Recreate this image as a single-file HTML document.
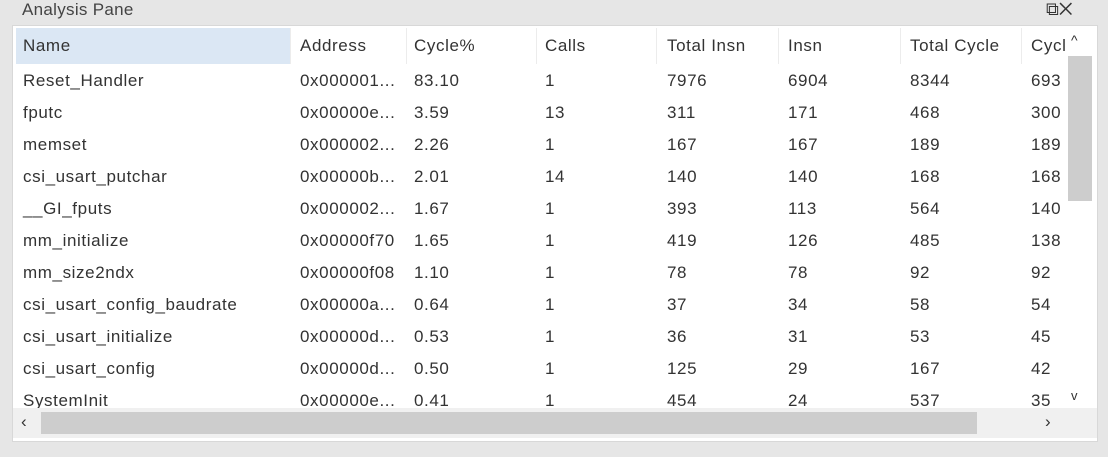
<!DOCTYPE html><html><head><style>
body{margin:0;width:1108px;height:457px;background:#e6e6e6;font-family:"Liberation Sans",sans-serif;overflow:hidden;position:relative;color:#333}
.title{position:absolute;left:22px;top:0;font-size:17px;color:#444;letter-spacing:.3px}
.ctl{position:absolute;left:1046px;top:-1px;font-size:18px;color:#333}
.panel{position:absolute;left:12px;top:25px;width:1084px;height:415px;background:#fff;border:1px solid #d8d8d8}
.c{position:absolute;font-size:17px;white-space:nowrap;letter-spacing:.6px}
.hl{position:absolute;left:3px;top:2px;width:274px;height:36px;background:#dbe7f4}
.sep{position:absolute;top:2px;width:1px;height:36px;background:#ececec}
.vs{position:absolute;left:1055px;top:30px;width:24px;height:145px;background:#cdcdcd}
.hs{position:absolute;left:28px;top:386px;width:936px;height:22px;background:#cdcdcd}
.bar{position:absolute;left:0;top:382px;width:1084px;height:30px;background:#f0f0f0}
</style></head><body>
<div class="title">Analysis Pane</div>
<div class="ctl">⧉✕</div>
<div class="panel">
<div class="hl"></div>
<div class="sep" style="left:277px"></div><div class="sep" style="left:393px"></div><div class="sep" style="left:523px"></div><div class="sep" style="left:643px"></div><div class="sep" style="left:765px"></div><div class="sep" style="left:887px"></div><div class="sep" style="left:1008px"></div>
<div id="t"></div>
<div class="bar"></div>
<div class="vs"></div>
<div class="hs"></div>
<div class="c" style="left:1058px;top:6px;font-size:14px">^</div>
<div class="c" style="left:1058px;top:362px;font-size:13px">v</div>
<div class="c" style="left:8px;top:386px">‹</div>
<div class="c" style="left:1032px;top:386px">›</div>
</div>
<script>
var xs=[10,287,401,532,654,775,897,1018];
var rows=[["Name","Address","Cycle%","Calls","Total Insn","Insn","Total Cycle","Cycl"],
["Reset_Handler","0x000001...","83.10","1","7976","6904","8344","693"],
["fputc","0x00000e...","3.59","13","311","171","468","300"],
["memset","0x000002...","2.26","1","167","167","189","189"],
["csi_usart_putchar","0x00000b...","2.01","14","140","140","168","168"],
["__GI_fputs","0x000002...","1.67","1","393","113","564","140"],
["mm_initialize","0x00000f70","1.65","1","419","126","485","138"],
["mm_size2ndx","0x00000f08","1.10","1","78","78","92","92"],
["csi_usart_config_baudrate","0x00000a...","0.64","1","37","34","58","54"],
["csi_usart_initialize","0x00000d...","0.53","1","36","31","53","45"],
["csi_usart_config","0x00000d...","0.50","1","125","29","167","42"],
["SystemInit","0x00000e...","0.41","1","454","24","537","35"]];
var h="";rows.forEach(function(r,i){var y=i==0?10:45+(i-1)*32;r.forEach(function(v,j){h+='<div class="c" style="left:'+xs[j]+'px;top:'+y+'px;'+(j==7?'width:40px;overflow:hidden':'')+'">'+v+'</div>'})});
document.getElementById("t").innerHTML=h;
</script>
</body></html>
